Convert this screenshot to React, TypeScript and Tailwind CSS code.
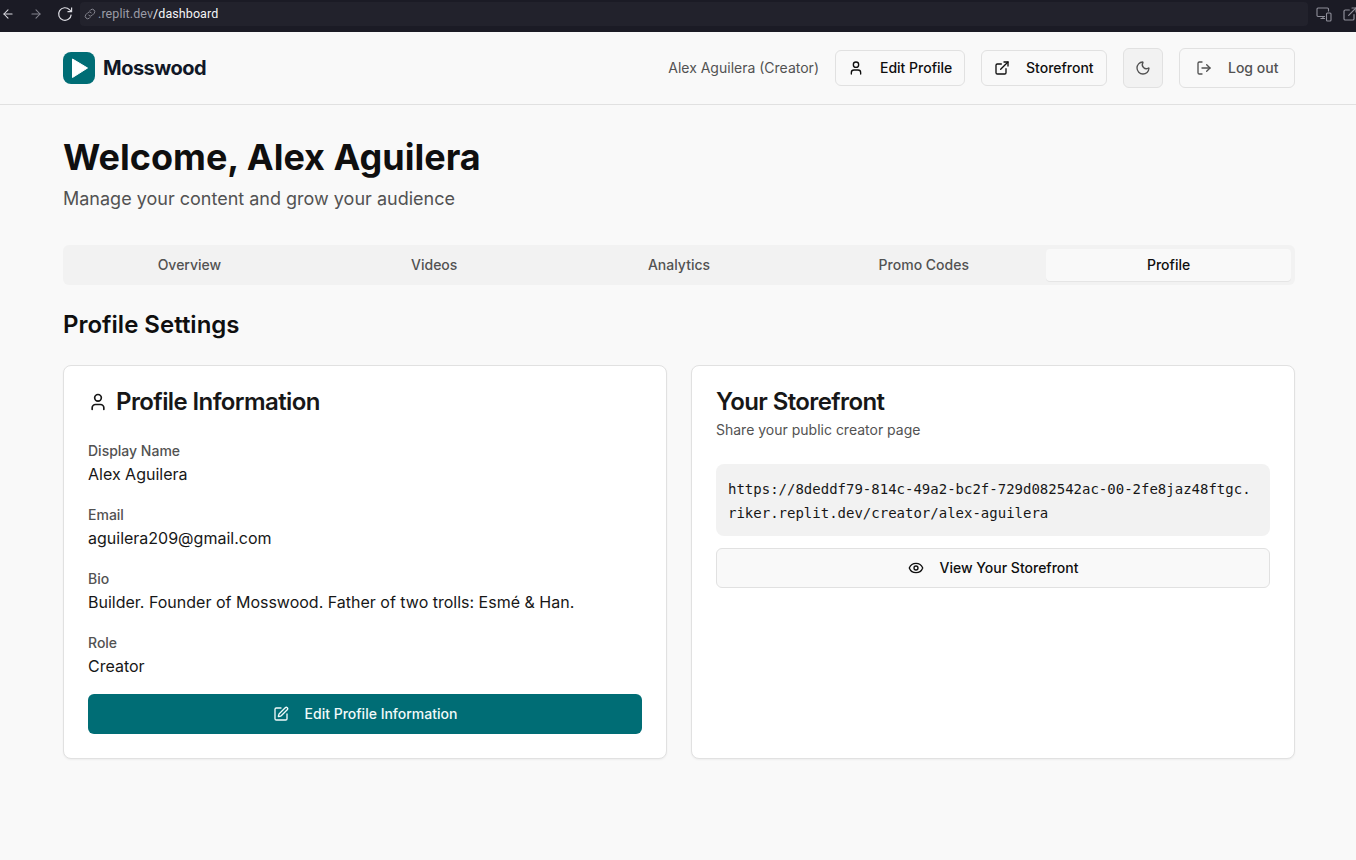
import React from "react";
import { ArrowLeft, ArrowRight, Eye, ExternalLink, LogOut, Moon, SquarePen, User } from "lucide-react";

function ReloadIcon() {
  return (
    <svg viewBox="0 0 16 16" fill="none" stroke="currentColor" strokeWidth="1.2" className="ml-[13.5px] size-4 text-[#dcdce2]">
      <path d="M14.2 8.6A6.3 6.3 0 1 1 12.5 3.7L14.5 5.6" />
      <path d="M14.6 1.6v4.1h-4.1" />
    </svg>
  );
}

function LinkIcon() {
  return (
    <svg viewBox="0 0 24 24" fill="none" stroke="currentColor" strokeWidth="2" className="size-3 text-[#85858f]">
      <path d="M9 14a5 5 0 0 0 7.500.5l4-4a5 5 0 0 0-7-7L11.500 5.500" />
      <path d="M15 10a5 5 0 0 0-7.500-.5l-4 4a5 5 0 0 0 7 7l2-2" />
    </svg>
  );
}

function DevicesIcon() {
  return (
    <svg viewBox="0 0 16 16" fill="none" stroke="currentColor" strokeWidth="1.1" className="size-4">
      <path d="M9 10.500H2A1 1 0 0 1 1 9.500V3a1 1 0 0 1 1-1h9.500a1 1 0 0 1 1 1v2.500" />
      <path d="M4.500 12.500h4.500M7 10.500v2" />
      <rect x="10.500" y="7" width="4.500" height="8" rx="1" />
    </svg>
  );
}

function BrowserBar() {
  return (
    <div className="flex h-8 items-start bg-[#1b1b25] font-['Roboto',sans-serif]">
      <div className="flex h-7 w-20 shrink-0 items-center pl-[1px]">
        <ArrowLeft className="size-[14px] text-[#dcdce2]" strokeWidth={1.8} />
        <ArrowRight className="ml-[14px] size-[14px] text-[#85858f]" strokeWidth={1.8} />
        <ReloadIcon />
      </div>
      <div className="mt-0.5 flex h-6 w-[1228px] shrink-0 items-center rounded bg-[#22222c] pl-1 text-[12.5px] tracking-[0.08px]">
        <LinkIcon />
        <span className="ml-[2px] text-[#9a9ba6]">.replit.dev</span>
        <span className="text-[#f4f4f6]">/dashboard</span>
      </div>
      <div className="ml-[8px] flex h-7 shrink-0 items-center gap-[10px] text-[#8f8f9a]">
        <DevicesIcon />
        <ExternalLink className="size-4" strokeWidth={1.8} />
      </div>
    </div>
  );
}

function Header() {
  return (
    <header className="flex h-[73px] items-center justify-between border-b border-[#e1e1e1] pr-[61px] pl-[63px]">
      <div className="flex items-center gap-2">
        <svg viewBox="0 0 32 32" className="size-8">
          <rect width="32" height="32" rx="8" fill="#006d75" />
          <path d="M9.5 7 24.5 16 9.5 25.5Z" fill="#fff" stroke="#fff" strokeWidth="1" strokeLinejoin="round" />
        </svg>
        <span className="text-[20px] font-bold tracking-[-0.025em] text-[#111827]">Mosswood</span>
      </div>
      <div className="flex items-center gap-4 text-sm">
        <span className="text-[#525252]">Alex Aguilera (Creator)</span>
        <button className="flex h-9 w-[130px] items-center gap-4 rounded-md border border-[#e1e1e1] pl-3 font-medium text-[#0f0f0f]">
          <User className="size-4" />Edit Profile
        </button>
        <button className="flex h-9 w-[126px] items-center gap-4 rounded-md border border-[#e1e1e1] pl-3 font-medium text-[#0f0f0f]">
          <ExternalLink className="size-4" />Storefront
        </button>
        <button className="flex size-10 items-center justify-center rounded-md border border-[#e1e1e1] bg-[#f2f2f2] text-[#525252]">
          <Moon className="size-4" />
        </button>
        <button className="flex h-10 w-[116px] items-center gap-4 rounded-md border border-[#e1e1e1] pl-4 font-medium text-[#525252]">
          <LogOut className="size-4" />Log out
        </button>
      </div>
    </header>
  );
}

const tabs = ["Overview", "Videos", "Analytics", "Promo Codes", "Profile"];

const fields = [
  ["Display Name", "Alex Aguilera"],
  ["Email", "aguilera209@gmail.com"],
  ["Bio", "Builder. Founder of Mosswood. Father of two trolls: Esmé & Han."],
  ["Role", "Creator"],
];

export default function App() {
  return (
    <div className="h-[860px] w-[1356px] overflow-hidden bg-[#f9f9f9] font-['Inter',sans-serif] text-[#171717] antialiased">
      <BrowserBar />
      <Header />
      <main className="pt-8 pr-[61px] pl-[63px]">
        <h1 className="text-4xl leading-10 font-bold text-[#0f0f0f]">Welcome, Alex Aguilera</h1>
        <p className="mt-2 text-lg leading-7 text-[#525252]">Manage your content and grow your audience</p>
        <div className="mt-8 grid h-10 grid-cols-5 rounded-md bg-[#f2f2f2] p-1 text-sm font-medium">
          {tabs.map((tab) => (
            <button
              key={tab}
              className={tab === "Profile" ? "rounded-sm bg-[#f9f9f9] text-[#0f0f0f] shadow-2xs" : "text-[#525252]"}
            >
              {tab}
            </button>
          ))}
        </div>
        <h2 className="mt-6 text-2xl leading-8 font-semibold text-[#0f0f0f]">Profile Settings</h2>
        <div className="mt-6 grid grid-cols-2 gap-6">
          <section className="h-[394px] rounded-lg border border-[#e1e1e1] bg-white p-6 shadow-xs">
            <h3 className="flex items-center gap-2 text-2xl leading-6 font-semibold tracking-[-0.025em]">
              <User className="size-5" />Profile Information
            </h3>
            <dl className="mt-6 space-y-4">
              {fields.map(([label, value]) => (
                <div key={label}>
                  <dt className="pt-0.5 text-sm leading-[22px] font-medium text-[#525252]">{label}</dt>
                  <dd className="text-base leading-6">{value}</dd>
                </div>
              ))}
            </dl>
            <button className="mt-4 flex h-10 w-full items-center justify-center gap-4 rounded-md bg-[#006d75] text-sm font-medium text-[#f0fafa]">
              <SquarePen className="size-4" />Edit Profile Information
            </button>
          </section>
          <section className="h-[394px] rounded-lg border border-[#e1e1e1] bg-white p-6 shadow-xs">
            <h3 className="text-2xl leading-6 font-semibold tracking-[-0.025em]">Your Storefront</h3>
            <p className="mt-1.5 text-sm leading-5 text-[#525252]">Share your public creator page</p>
            <div className="mt-6 h-[72px] rounded-lg bg-[#f2f2f2] px-3 pt-[13px]">
              <code className="block font-['DejaVu_Sans_Mono',monospace] text-sm leading-6 break-all">
                https://8deddf79-814c-49a2-bc2f-729d082542ac-00-2fe8jaz48ftgc.riker.replit.dev/creator/alex-aguilera
              </code>
            </div>
            <button className="mt-3 flex h-10 w-full items-center justify-center gap-4 rounded-md border border-[#e1e1e1] bg-[#f9f9f9] text-sm font-medium text-[#0f0f0f]">
              <Eye className="size-4" />View Your Storefront
            </button>
          </section>
        </div>
      </main>
    </div>
  );
}
